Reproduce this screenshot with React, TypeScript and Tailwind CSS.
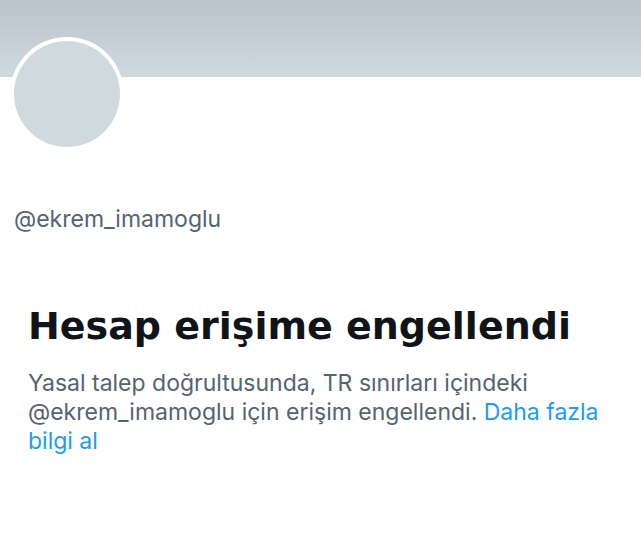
const App = () => {
  return (
    <div className="min-h-screen w-full bg-white font-['Inter','Liberation_Sans',Arial,sans-serif]">
      <div className="h-[77px] w-full bg-gradient-to-b from-[#bbc3cb] to-[#d0d9de]" />

      <div className="-mt-[40px] ml-[10px] h-[114px] w-[114px] rounded-full bg-white p-[4px]">
        <div className="h-full w-full rounded-full bg-[#cfd9de]" />
      </div>

      <div className="mt-[54px] pl-[14px] text-[23px] leading-[28px] text-[#536471]">
        @ekrem_imamoglu
      </div>

      <div className="px-[28px]">
        <h1 className="mt-[73px] font-['DejaVu_Sans',sans-serif] text-[38px] font-bold leading-[40px] text-[#0f1419]">
          Hesap erişime engellendi
        </h1>
        <p className="mt-[23px] text-[23px] leading-[29px] text-[#536471]">
          Yasal talep doğrultusunda, TR sınırları içindeki
          <br />
          @ekrem_imamoglu için erişim engellendi.{" "}
          <span className="text-[#1d9bf0]">Daha fazla</span>
          <br />
          <span className="text-[#1d9bf0]">bilgi al</span>
        </p>
      </div>
    </div>
  );
};

export default App;
